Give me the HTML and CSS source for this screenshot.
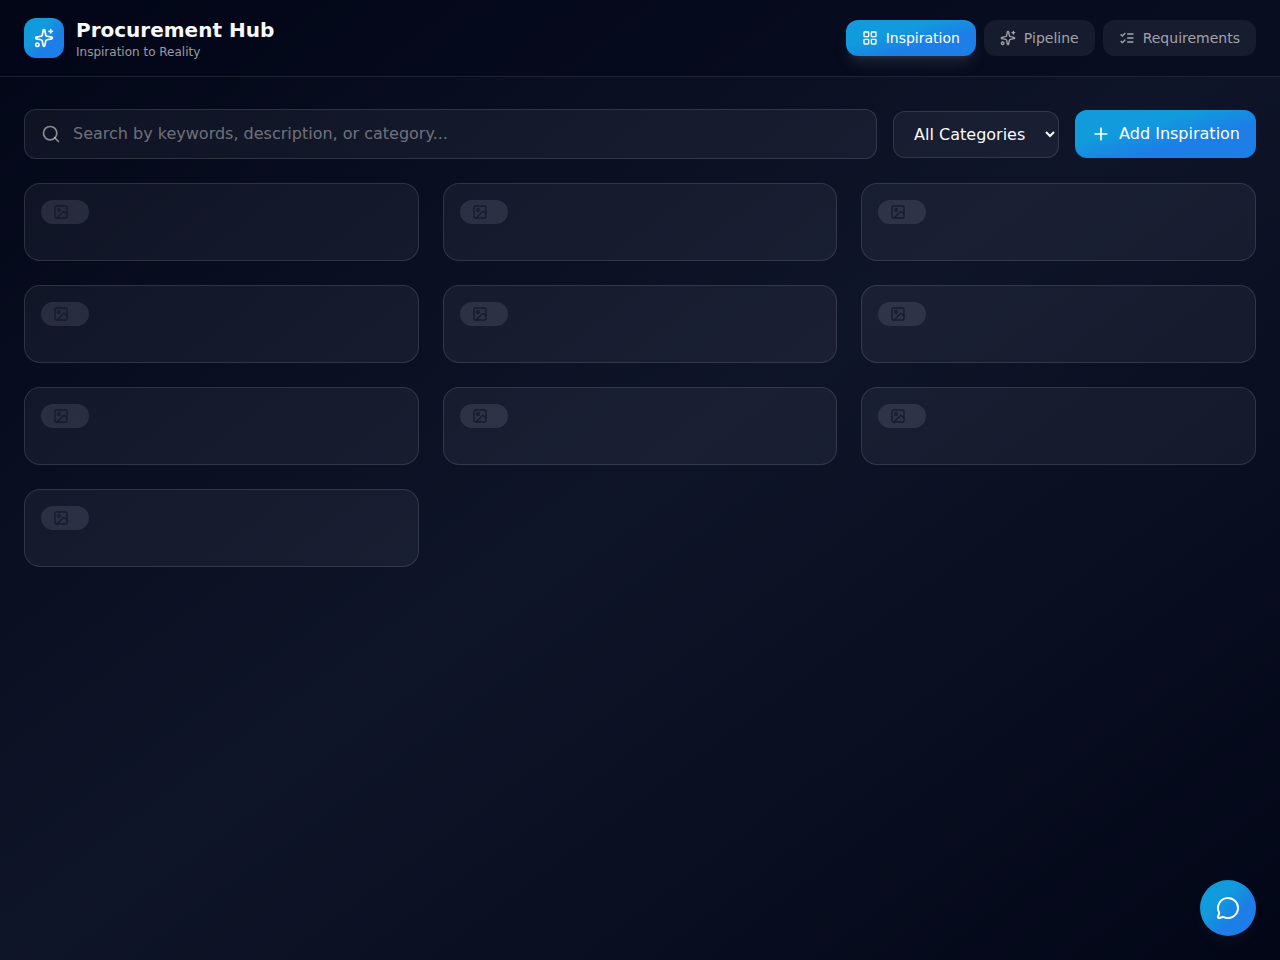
FILE: index.html
```html
<!DOCTYPE html>
<html lang="en">
<head>
  <meta charset="UTF-8">
  <meta name="viewport" content="width=device-width, initial-scale=1.0">
  <title>Procurement Hub</title>
  <link rel="stylesheet" href="styles.css">
</head>
<body>
  <!-- Shared icons -->
  <svg class="icon-defs" aria-hidden="true">
    <symbol id="sparkles" viewBox="0 0 24 24">
      <path d="M11.017 2.814a1 1 0 0 1 1.966 0l1.051 5.558a2 2 0 0 0 1.594 1.594l5.558 1.051a1 1 0 0 1 0 1.966l-5.558 1.051a2 2 0 0 0-1.594 1.594l-1.051 5.558a1 1 0 0 1-1.966 0l-1.051-5.558a2 2 0 0 0-1.594-1.594l-5.558-1.051a1 1 0 0 1 0-1.966l5.558-1.051a2 2 0 0 0 1.594-1.594z"/>
      <path d="M20 2v4M22 4h-4"/>
      <circle cx="4" cy="20" r="2"/>
    </symbol>
    <symbol id="grid" viewBox="0 0 24 24">
      <rect x="3" y="3" width="7" height="7" rx="1"/>
      <rect x="14" y="3" width="7" height="7" rx="1"/>
      <rect x="14" y="14" width="7" height="7" rx="1"/>
      <rect x="3" y="14" width="7" height="7" rx="1"/>
    </symbol>
    <symbol id="checks" viewBox="0 0 24 24">
      <path d="m3 17 2 2 4-4M3 7l2 2 4-4M13 6h8M13 12h8M13 18h8"/>
    </symbol>
    <symbol id="search" viewBox="0 0 24 24">
      <circle cx="11" cy="11" r="8"/>
      <path d="m21 21-4.3-4.3"/>
    </symbol>
    <symbol id="plus" viewBox="0 0 24 24">
      <path d="M5 12h14M12 5v14"/>
    </symbol>
    <symbol id="image" viewBox="0 0 24 24">
      <rect x="3" y="3" width="18" height="18" rx="2"/>
      <circle cx="9" cy="9" r="2"/>
      <path d="m21 15-3.086-3.086a2 2 0 0 0-2.828 0L6 21"/>
    </symbol>
    <symbol id="message" viewBox="0 0 24 24">
      <path d="M2.992 16.342a2 2 0 0 1 .094 1.167l-1.065 3.29a1 1 0 0 0 1.236 1.168l3.413-.998a2 2 0 0 1 1.099.092 10 10 0 1 0-4.777-4.719"/>
    </symbol>
  </svg>

  <header class="header">
    <div class="brand">
      <div class="logo"><svg class="icon icon-md"><use href="#sparkles"/></svg></div>
      <div>
        <h1>Procurement Hub</h1>
        <p class="tagline">Inspiration to Reality</p>
      </div>
    </div>
    <nav class="nav">
      <button class="tab active" type="button"><svg class="icon"><use href="#grid"/></svg>Inspiration</button>
      <button class="tab" type="button"><svg class="icon"><use href="#sparkles"/></svg>Pipeline</button>
      <button class="tab" type="button"><svg class="icon"><use href="#checks"/></svg>Requirements</button>
    </nav>
  </header>

  <main class="main">
    <div class="toolbar">
      <label class="search">
        <svg class="icon icon-md"><use href="#search"/></svg>
        <input type="text" aria-label="Search inspirations" placeholder="Search by keywords, description, or category...">
      </label>
      <select class="category" aria-label="Category">
        <option>All Categories</option>
      </select>
      <button class="add" type="button"><svg class="icon icon-md"><use href="#plus"/></svg>Add Inspiration</button>
    </div>

    <div class="cards">
      <article class="card"><span class="badge"><svg class="icon"><use href="#image"/></svg></span></article>
      <article class="card"><span class="badge"><svg class="icon"><use href="#image"/></svg></span></article>
      <article class="card"><span class="badge"><svg class="icon"><use href="#image"/></svg></span></article>
      <article class="card"><span class="badge"><svg class="icon"><use href="#image"/></svg></span></article>
      <article class="card"><span class="badge"><svg class="icon"><use href="#image"/></svg></span></article>
      <article class="card"><span class="badge"><svg class="icon"><use href="#image"/></svg></span></article>
      <article class="card"><span class="badge"><svg class="icon"><use href="#image"/></svg></span></article>
      <article class="card"><span class="badge"><svg class="icon"><use href="#image"/></svg></span></article>
      <article class="card"><span class="badge"><svg class="icon"><use href="#image"/></svg></span></article>
      <article class="card"><span class="badge"><svg class="icon"><use href="#image"/></svg></span></article>
    </div>
  </main>

  <button class="chat" type="button" aria-label="Open chat"><svg class="icon icon-lg"><use href="#message"/></svg></button>
</body>
</html>
```

FILE: styles.css
```css
/* Basic Reset */
* { box-sizing: border-box; margin: 0; padding: 0; }

body {
  min-height: 100vh;
  font-family: "DejaVu Sans", sans-serif;
  font-size: 16px;
  line-height: 24px;
  color: #f8fafc;
  background: linear-gradient(to bottom right, #020617, #0f1528, #020617);
}

button, input, select {
  font: inherit;
  color: inherit;
  border: none;
}
button { cursor: pointer; }

/* Icons */
.icon-defs { display: none; }
.icon {
  flex-shrink: 0;
  width: 16px;
  height: 16px;
  fill: none;
  stroke: currentColor;
  stroke-width: 2;
  stroke-linecap: round;
  stroke-linejoin: round;
}
.icon-md { width: 20px; height: 20px; }
.icon-lg { width: 24px; height: 24px; }

/* Header */
.header {
  display: flex;
  justify-content: space-between;
  align-items: center;
  padding: 16px 24px;
  background: rgba(2, 6, 23, 0.5);
  border-bottom: 1px solid rgba(255, 255, 255, 0.1);
}
.brand {
  display: flex;
  align-items: center;
  gap: 12px;
}
.logo {
  display: flex;
  justify-content: center;
  align-items: center;
  width: 40px;
  height: 40px;
  border-radius: 12px;
}
.logo, .tab.active, .add, .chat {
  color: #fff;
  background: linear-gradient(to bottom right, #119bdd 35%, #1c7ee6 65%);
}
h1 {
  font-size: 20px;
  line-height: 28px;
}
.tagline {
  font-size: 12px;
  line-height: 16px;
  color: rgba(255, 255, 255, 0.6);
}
.nav {
  display: flex;
  gap: 8px;
}
.tab {
  display: flex;
  align-items: center;
  gap: 8px;
  padding: 8px 16px;
  font-size: 14px;
  line-height: 20px;
  color: rgba(255, 255, 255, 0.6);
  background: rgba(226, 232, 255, 0.07);
  border-radius: 12px;
}
.tab.active {
  box-shadow: 0 10px 15px -3px rgba(148, 163, 184, 0.15), 0 4px 6px -4px rgba(148, 163, 184, 0.2);
}

/* Search and filters */
.main { padding: 32px 24px; }
.toolbar {
  display: flex;
  align-items: center;
  gap: 16px;
  margin-bottom: 24px;
}
.search {
  display: flex;
  flex: 1;
  align-items: center;
  gap: 12px;
  padding: 12px 16px;
  color: rgba(255, 255, 255, 0.5);
  background: rgba(226, 232, 255, 0.05);
  border: 1px solid rgba(255, 255, 255, 0.12);
  border-radius: 12px;
}
.search input {
  flex: 1;
  min-width: 0;
  height: 24px;
  color: #f8fafc;
  background: none;
  outline: none;
}
.search input::placeholder { color: rgba(255, 255, 255, 0.4); }
.category {
  padding: 12px 0 12px 16px;
  width: 166px;
  background: rgba(226, 232, 255, 0.05);
  border: 1px solid rgba(255, 255, 255, 0.12);
  border-radius: 12px;
}
.category option { background: #0f172a; }
.add {
  display: flex;
  align-items: center;
  gap: 8px;
  padding: 12px 16px;
  border-radius: 12px;
}

/* Cards */
.cards {
  display: grid;
  grid-template-columns: repeat(3, 1fr);
  gap: 24px;
}
.card {
  min-height: 78px;
  padding: 16px;
  background: rgba(226, 232, 255, 0.05);
  border: 1px solid rgba(255, 255, 255, 0.12);
  border-radius: 16px;
}
.badge {
  display: flex;
  width: 48px;
  padding: 4px 12px;
  color: #161b2b;
  background: rgba(226, 232, 255, 0.11);
  border-radius: 12px;
}

/* Chat button */
.chat {
  position: fixed;
  right: 24px;
  bottom: 24px;
  display: flex;
  justify-content: center;
  align-items: center;
  width: 56px;
  height: 56px;
  border-radius: 50%;
  box-shadow: 0 10px 15px -3px rgba(148, 163, 184, 0.05);
}

@media (max-width: 800px) {
  .header, .toolbar { flex-wrap: wrap; gap: 16px; }
  .cards { grid-template-columns: 1fr; }
}
```
